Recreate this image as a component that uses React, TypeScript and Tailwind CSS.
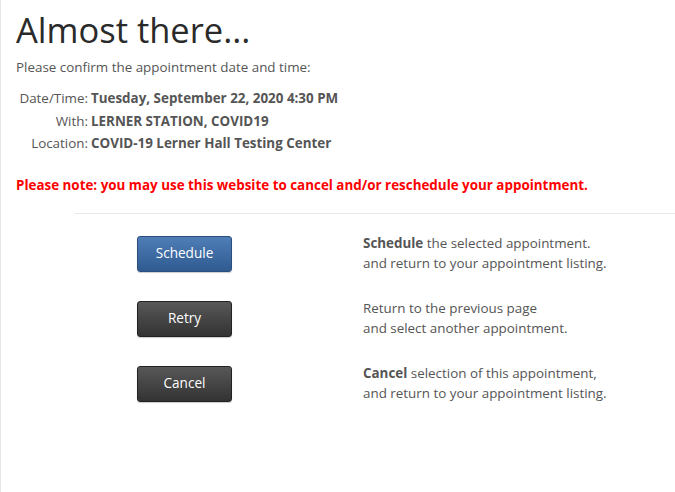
import React from "react";

const rows = [
  {
    label: "Schedule",
    blue: true,
    bold: "Schedule",
    l1: " the selected appointment.",
    l2: "and return to your appointment listing.",
  },
  {
    label: "Retry",
    blue: false,
    bold: "",
    l1: "Return to the previous page",
    l2: "and select another appointment.",
  },
  {
    label: "Cancel",
    blue: false,
    bold: "Cancel",
    l1: " selection of this appointment,",
    l2: "and return to your appointment listing.",
  },
];

export default function App() {
  return (
    <div
      className="w-[675px] h-[492px] bg-white border-l border-[#e6e6e6] text-[#555] overflow-hidden"
      style={{ fontFamily: '"Open Sans", sans-serif' }}
    >
      <div className="pl-[15px] pt-[6px]">
        <h1 className="text-[34.5px] leading-[48px] text-[#2a2a2a] font-normal">
          Almost there...
        </h1>
        <p className="text-[13.4px] leading-[20px] mt-[3px]">
          Please confirm the appointment date and time:
        </p>
        <div className="mt-[10px] grid grid-cols-[72px_1fr] text-[13.4px] leading-[22.5px]">
          <div className="text-right">Date/Time:</div>
          <div className="pl-[3px] font-bold">Tuesday, September 22, 2020 4:30 PM</div>
          <div className="text-right">With:</div>
          <div className="pl-[3px] font-bold">LERNER STATION, COVID19</div>
          <div className="text-right">Location:</div>
          <div className="pl-[3px] font-bold">COVID-19 Lerner Hall Testing Center</div>
        </div>
        <p className="mt-[20px] text-[13.4px] leading-[20px] font-bold text-[#ff0000]">
          Please note: you may use this website to cancel and/or reschedule your appointment.
        </p>
      </div>
      <div className="ml-[74px] mt-[18px] border-t border-[#e8e8e8]" />
      <div className="mt-[22px] flex flex-col gap-[29px]">
        {rows.map((r) => (
          <div key={r.label} className="flex items-start h-[36px]">
            <div className="w-[136px] shrink-0" />
            <button
              className={
                r.blue
                  ? "w-[95px] h-[36px] rounded-[3px] text-white text-[13.6px] border border-[#2a4f7e] bg-gradient-to-b from-[#4f7db6] to-[#2f5b91] shadow-[0_1px_1px_rgba(0,0,0,0.2)]"
                  : "w-[95px] h-[36px] rounded-[3px] text-white text-[13.6px] border border-[#222] bg-gradient-to-b from-[#585858] to-[#333] shadow-[0_1px_1px_rgba(0,0,0,0.2)]"
              }
            >
              {r.label}
            </button>
            <div className="ml-[131px] text-[13.4px] leading-[20px] -mt-[3px]">
              <div>
                {r.bold && <span className="font-bold">{r.bold}</span>}
                {r.l1}
              </div>
              <div>{r.l2}</div>
            </div>
          </div>
        ))}
      </div>
    </div>
  );
}
